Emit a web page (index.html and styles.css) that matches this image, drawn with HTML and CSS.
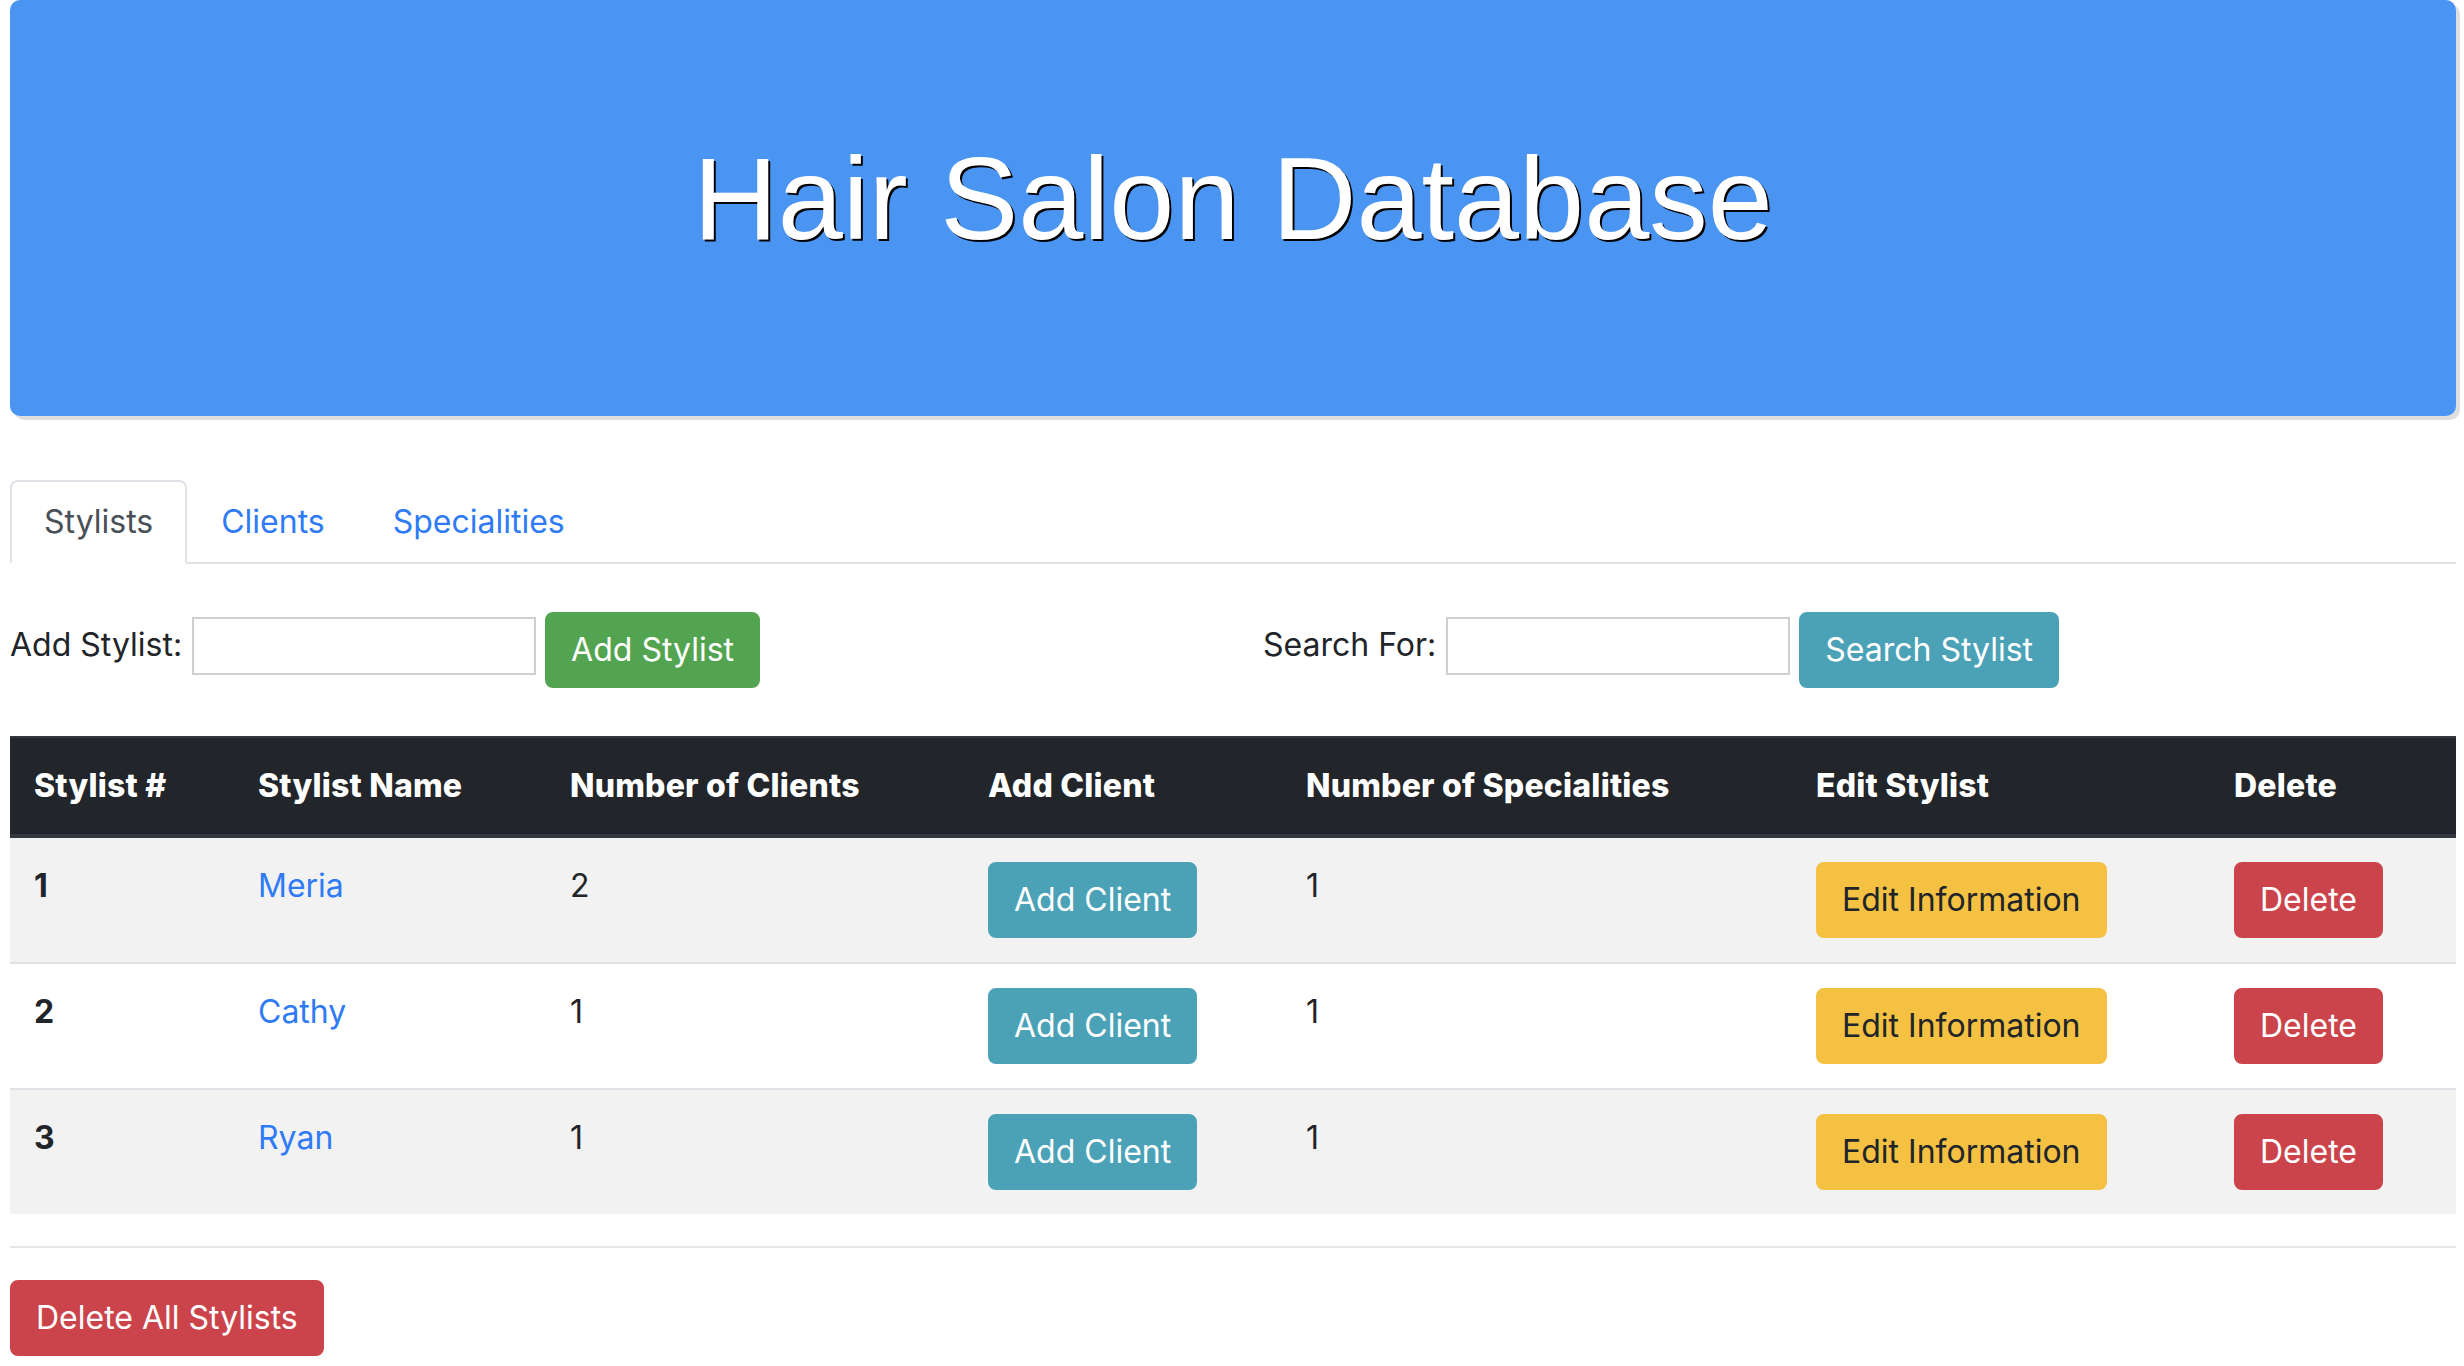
FILE: index.html
```html
<!DOCTYPE html>
<html lang="en">
<head>
<meta charset="utf-8">
<title>Hair Salon Database</title>
<link rel="stylesheet" href="styles.css">
</head>
<body>
<div class="page">
  <header class="jumbotron">
    <h1 class="title">Hair Salon Database</h1>
  </header>

  <ul class="tabs">
    <li class="tab"><a class="tab-link active" href="#">Stylists</a></li>
    <li class="tab"><a class="tab-link" href="#">Clients</a></li>
    <li class="tab"><a class="tab-link" href="#">Specialities</a></li>
  </ul>

  <div class="forms">
    <form class="inline-form">
      <label class="form-label">Add Stylist:</label>
      <input class="text-input" type="text">
      <button class="btn btn-success" type="button">Add Stylist</button>
    </form>
    <form class="inline-form search-form">
      <label class="form-label">Search For:</label>
      <input class="text-input" type="text">
      <button class="btn btn-info" type="button">Search Stylist</button>
    </form>
  </div>

  <table class="table">
    <thead>
      <tr>
        <th>Stylist #</th>
        <th>Stylist Name</th>
        <th>Number of Clients</th>
        <th>Add Client</th>
        <th>Number of Specialities</th>
        <th>Edit Stylist</th>
        <th>Delete</th>
      </tr>
    </thead>
    <tbody>
      <tr>
        <th class="row-head">1</th>
        <td><a class="name-link" href="#">Meria</a></td>
        <td>2</td>
        <td><button class="btn btn-info" type="button">Add Client</button></td>
        <td>1</td>
        <td><button class="btn btn-warning" type="button">Edit Information</button></td>
        <td><button class="btn btn-danger" type="button">Delete</button></td>
      </tr>
      <tr>
        <th class="row-head">2</th>
        <td><a class="name-link" href="#">Cathy</a></td>
        <td>1</td>
        <td><button class="btn btn-info" type="button">Add Client</button></td>
        <td>1</td>
        <td><button class="btn btn-warning" type="button">Edit Information</button></td>
        <td><button class="btn btn-danger" type="button">Delete</button></td>
      </tr>
      <tr>
        <th class="row-head">3</th>
        <td><a class="name-link" href="#">Ryan</a></td>
        <td>1</td>
        <td><button class="btn btn-info" type="button">Add Client</button></td>
        <td>1</td>
        <td><button class="btn btn-warning" type="button">Edit Information</button></td>
        <td><button class="btn btn-danger" type="button">Delete</button></td>
      </tr>
    </tbody>
  </table>

  <hr class="divider">

  <button class="btn btn-danger" type="button">Delete All Stylists</button>
</div>
</body>
</html>
```

FILE: styles.css
```css
* {
  box-sizing: border-box;
}

body {
  margin: 0;
  font-family: Inter, "Noto Sans", "Liberation Sans", sans-serif;
  font-size: 32px;
  line-height: 1.5;
  color: #212529;
  background: #ffffff;
}

.page {
  padding: 0 8px 0 10px;
}

/* Jumbotron header */
.jumbotron {
  background: #4a94f2;
  border-radius: 10px;
  box-shadow: 4px 4px 0 #dfdfdf;
  padding: 128px 64px 130px;
  margin-bottom: 64px;
  text-align: center;
}

.title {
  margin: 0 0 16px;
  font-family: "Liberation Sans", Arial, sans-serif;
  font-weight: 400;
  font-size: 117px;
  line-height: 1.21;
  color: #ffffff;
  text-shadow: 2px 2px 0 #000000;
}

/* Tabs */
.tabs {
  display: flex;
  list-style: none;
  margin: 0;
  padding: 0;
  border-bottom: 2px solid #dee2e6;
}

.tab {
  margin-bottom: -2px;
}

.tab-link {
  display: block;
  padding: 16px 32px;
  border: 2px solid transparent;
  border-radius: 8px 8px 0 0;
  color: #2f7bf6;
  text-decoration: none;
}

.tab-link.active {
  color: #495057;
  background: #ffffff;
  border-color: #dee2e6 #dee2e6 #ffffff;
}

/* Forms */
.forms {
  display: grid;
  grid-template-columns: 1fr 1fr;
  margin: 48px 0;
}

.inline-form {
  display: flex;
  align-items: flex-start;
  margin: 0;
}

.search-form {
  padding-left: 30px;
}

.form-label {
  margin: 9px 10px 0 0;
}

.text-input {
  width: 344px;
  height: 58px;
  margin: 5px 9px 0 0;
  padding: 2px 4px;
  border: 2px solid #cfcfcf;
  font: inherit;
  background: #ffffff;
}

/* Buttons */
.btn {
  display: inline-block;
  margin: 0;
  padding: 12px 24px;
  border: 2px solid transparent;
  border-radius: 8px;
  font-family: inherit;
  font-size: 32px;
  font-weight: 400;
  line-height: 48px;
  color: #ffffff;
  cursor: pointer;
  white-space: nowrap;
}

.btn-success {
  background: #53a451;
  border-color: #53a451;
}

.btn-info {
  background: #4ba2b7;
  border-color: #4ba2b7;
}

.btn-warning {
  background: #f5c143;
  border-color: #f5c143;
  color: #212529;
}

.btn-danger {
  background: #cc444b;
  border-color: #cc444b;
}

/* Table */
.table {
  width: 100%;
  table-layout: fixed;
  border-collapse: collapse;
  margin-bottom: 32px;
}

.table th,
.table td {
  padding: 24px;
  vertical-align: top;
  text-align: left;
  border-top: 2px solid #dee2e6;
}

.table thead th {
  vertical-align: bottom;
  background: #222529;
  color: #ffffff;
  font-weight: 800;
  letter-spacing: 0.2px;
  border-top: 2px solid #32383e;
  border-bottom: 4px solid #32383e;
}

.table thead th:nth-child(1) { width: 224px; }
.table thead th:nth-child(2) { width: 312px; }
.table thead th:nth-child(3) { width: 418px; }
.table thead th:nth-child(4) { width: 318px; }
.table thead th:nth-child(5) { width: 510px; }
.table thead th:nth-child(6) { width: 418px; }

.table tbody tr:nth-child(odd) {
  background: #f2f2f2;
}

.row-head {
  font-weight: 700;
}

.name-link {
  color: #2f7bf6;
  text-decoration: none;
}

.divider {
  margin: 32px 0;
  border: 0;
  border-top: 2px solid #e6e6e6;
}
```
